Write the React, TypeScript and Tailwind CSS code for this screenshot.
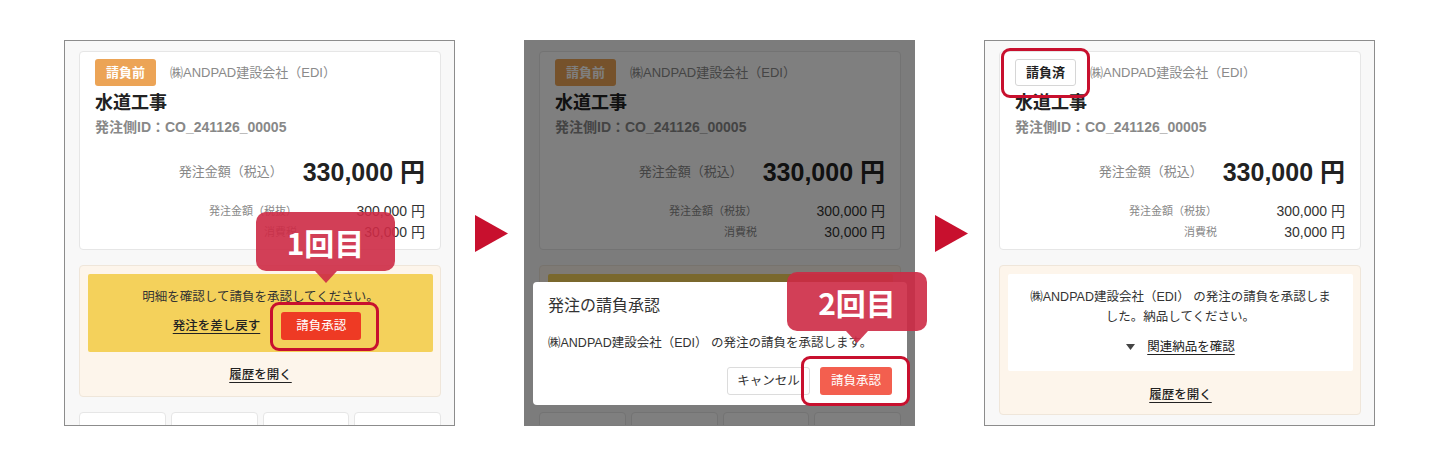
import type { ReactNode } from "react";

// Three steps of the 請負承認 flow, side by side with arrows between them.

function Badge({ done }: { done?: boolean }) {
  return done ? (
    <span className="flex h-[27px] w-[61px] items-center justify-center rounded-[3px] border border-[#d6d6d6] bg-white text-[13px] font-bold text-[#222]">
      請負済
    </span>
  ) : (
    <span className="flex h-[27px] w-[61px] items-center justify-center rounded-[3px] bg-[#eca456] text-[13px] font-bold text-white">
      請負前
    </span>
  );
}

function OrderCard({ done }: { done?: boolean }) {
  return (
    <div className="h-[199px] rounded-[4px] border border-[#e6e6e6] bg-white px-[15px] pt-[7px]">
      <div className="flex items-center gap-[14px]">
        <Badge done={done} />
        <span className="text-[13px] text-[#8a8a8a]">㈱ANDPAD建設会社（EDI）</span>
      </div>
      <div className="mt-[5px] text-[18px] font-bold leading-[24px] text-[#222]">水道工事</div>
      <div className="mt-[2px] text-[14px] font-bold leading-[20px] text-[#888]">発注側ID：CO_241126_00005</div>
      <div className="mt-[19px] flex items-center justify-end gap-[20px] leading-[32px]">
        <span className="text-[13px] text-[#888]">発注金額（税込）</span>
        <span className="text-[25px] font-bold text-[#222]">330,000 円</span>
      </div>
      <div className="mt-[13px] grid grid-cols-[1fr_128px] text-right leading-[21px]">
        <span className="text-[11px] text-[#888]">発注金額（税抜）</span>
        <span className="text-[14px] text-[#333]">300,000 円</span>
        <span className="text-[11px] text-[#888]">消費税</span>
        <span className="text-[14px] text-[#333]">30,000 円</span>
      </div>
    </div>
  );
}

function PendingSection() {
  return (
    <div className="mt-[15px] h-[132px] rounded-[4px] border border-[#efe6da] bg-[#fdf5eb] pl-[8px] pr-[7px] pt-[8px]">
      <div className="h-[78px] rounded-[2px] bg-[#f4d15b] pt-[13px] text-center">
        <p className="text-[12.5px] leading-[20px] text-[#333]">明細を確認して請負を承認してください。</p>
        <div className="mt-[5px] flex items-center justify-center gap-[21px] pl-[13px]">
          <span className="text-[12.5px] font-medium text-[#222] underline underline-offset-[3px]">発注を差し戻す</span>
          <button className="flex h-[28px] w-[80px] items-center justify-center rounded-[3px] bg-[#ee3a24] text-[12.5px] text-white">
            請負承認
          </button>
        </div>
      </div>
      <p className="mt-[13px] text-center text-[12.5px] font-medium leading-[20px] text-[#222] underline underline-offset-[3px]">
        履歴を開く
      </p>
    </div>
  );
}

function DoneSection() {
  return (
    <div className="mt-[15px] h-[150px] rounded-[4px] border border-[#efe6da] bg-[#fdf5eb] pl-[8px] pr-[7px] pt-[8px]">
      <div className="h-[97px] rounded-[2px] bg-white pt-[13px] text-center text-[12.5px] leading-[20px] text-[#333]">
        <p>
          ㈱ANDPAD建設会社（EDI） の発注の請負を承認しま
          <br />
          した。納品してください。
        </p>
        <div className="mt-[10px] flex items-center justify-center gap-[12px]">
          <svg width="9" height="6" viewBox="0 0 9 6">
            <polygon points="0,0 9,0 4.5,6" fill="#444" />
          </svg>
          <span className="text-[#222] underline underline-offset-[3px]">関連納品を確認</span>
        </div>
      </div>
      <p className="mt-[14px] text-center text-[12.5px] font-medium leading-[20px] text-[#222] underline underline-offset-[3px]">
        履歴を開く
      </p>
    </div>
  );
}

function BottomTabs() {
  return (
    <div className="mt-[15px] flex gap-[5px]">
      {[0, 1, 2, 3].map((i) => (
        <div key={i} className="h-[40px] flex-1 rounded-[4px] border border-[#e6e6e6] bg-white" />
      ))}
    </div>
  );
}

function Highlight({ className }: { className: string }) {
  return <div className={`absolute rounded-[9px] border-[3px] border-[#c8102e] ${className}`} />;
}

function Callout({ label, className }: { label: string; className: string }) {
  return (
    <div className={`absolute ${className}`}>
      <div className="flex h-full w-full items-center justify-center rounded-[10px] bg-[#cd2a45]/90 font-['Noto_Sans_CJK_JP',sans-serif] text-[30px] font-bold leading-none text-white">
        {label}
      </div>
      <svg className="absolute left-[59px] top-full" width="22" height="12" viewBox="0 0 22 12">
        <polygon points="0,0 22,0 11,12" fill="#cd2a45" fillOpacity="0.9" />
      </svg>
    </div>
  );
}

function Panel({ children, overlay, border = "border-[#8c8c8c]" }: { children: ReactNode; overlay?: ReactNode; border?: string }) {
  return (
    <div className={`relative h-[386px] w-[391px] shrink-0 border bg-[#f8f8f8] ${border}`}>
      <div className="h-full overflow-hidden pl-[14px] pr-[13px] pt-[10px]">{children}</div>
      {overlay}
    </div>
  );
}

function Arrow() {
  return (
    <div className="flex h-[386px] w-[69px] shrink-0 items-center justify-center pl-[3px]">
      <svg width="33" height="37" viewBox="0 0 33 37">
        <polygon points="0,0 33,18.5 0,37" fill="#c8102e" />
      </svg>
    </div>
  );
}

export default function App() {
  return (
    <div className="flex h-[466px] w-[1440px] bg-white pl-[64px] pt-[40px] font-['Liberation_Sans','Noto_Sans_CJK_JP',sans-serif]">
      <Panel
        overlay={
          <>
            <Highlight className="left-[205px] top-[261px] h-[49px] w-[109px]" />
            <Callout label="1回目" className="left-[191px] top-[171px] h-[59px] w-[139px]" />
          </>
        }
      >
        <OrderCard />
        <PendingSection />
        <BottomTabs />
      </Panel>

      <Arrow />

      <Panel
        border="border-[#7c7c7c]"
        overlay={
          <>
            <div className="absolute inset-0 bg-black/50" />
            <div className="absolute left-[8px] top-[241px] h-[123px] w-[374px] rounded-[4px] bg-white px-[15px] pt-[12px]">
              <p className="text-[16px] leading-[24px] text-[#333]">発注の請負承認</p>
              <p className="mt-[15px] text-[12.5px] leading-[20px] text-[#333]">㈱ANDPAD建設会社（EDI） の発注の請負を承認します。</p>
              <div className="mt-[14px] flex justify-end gap-[10px]">
                <button className="flex h-[28px] w-[83px] items-center justify-center rounded-[3px] border border-[#dcdcdc] bg-white text-[12.5px] text-[#333]">
                  キャンセル
                </button>
                <button className="flex h-[28px] w-[72px] items-center justify-center rounded-[3px] bg-[#f35f4f] text-[12.5px] text-white">
                  請負承認
                </button>
              </div>
            </div>
            <Highlight className="left-[276px] top-[315px] h-[50px] w-[109px]" />
            <Callout label="2回目" className="left-[262px] top-[231px] h-[59px] w-[140px]" />
          </>
        }
      >
        <OrderCard />
        <PendingSection />
        <BottomTabs />
      </Panel>

      <Arrow />

      <Panel overlay={<Highlight className="left-[16px] top-[7px] h-[50px] w-[89px]" />}>
        <OrderCard done />
        <DoneSection />
        <BottomTabs />
      </Panel>
    </div>
  );
}
